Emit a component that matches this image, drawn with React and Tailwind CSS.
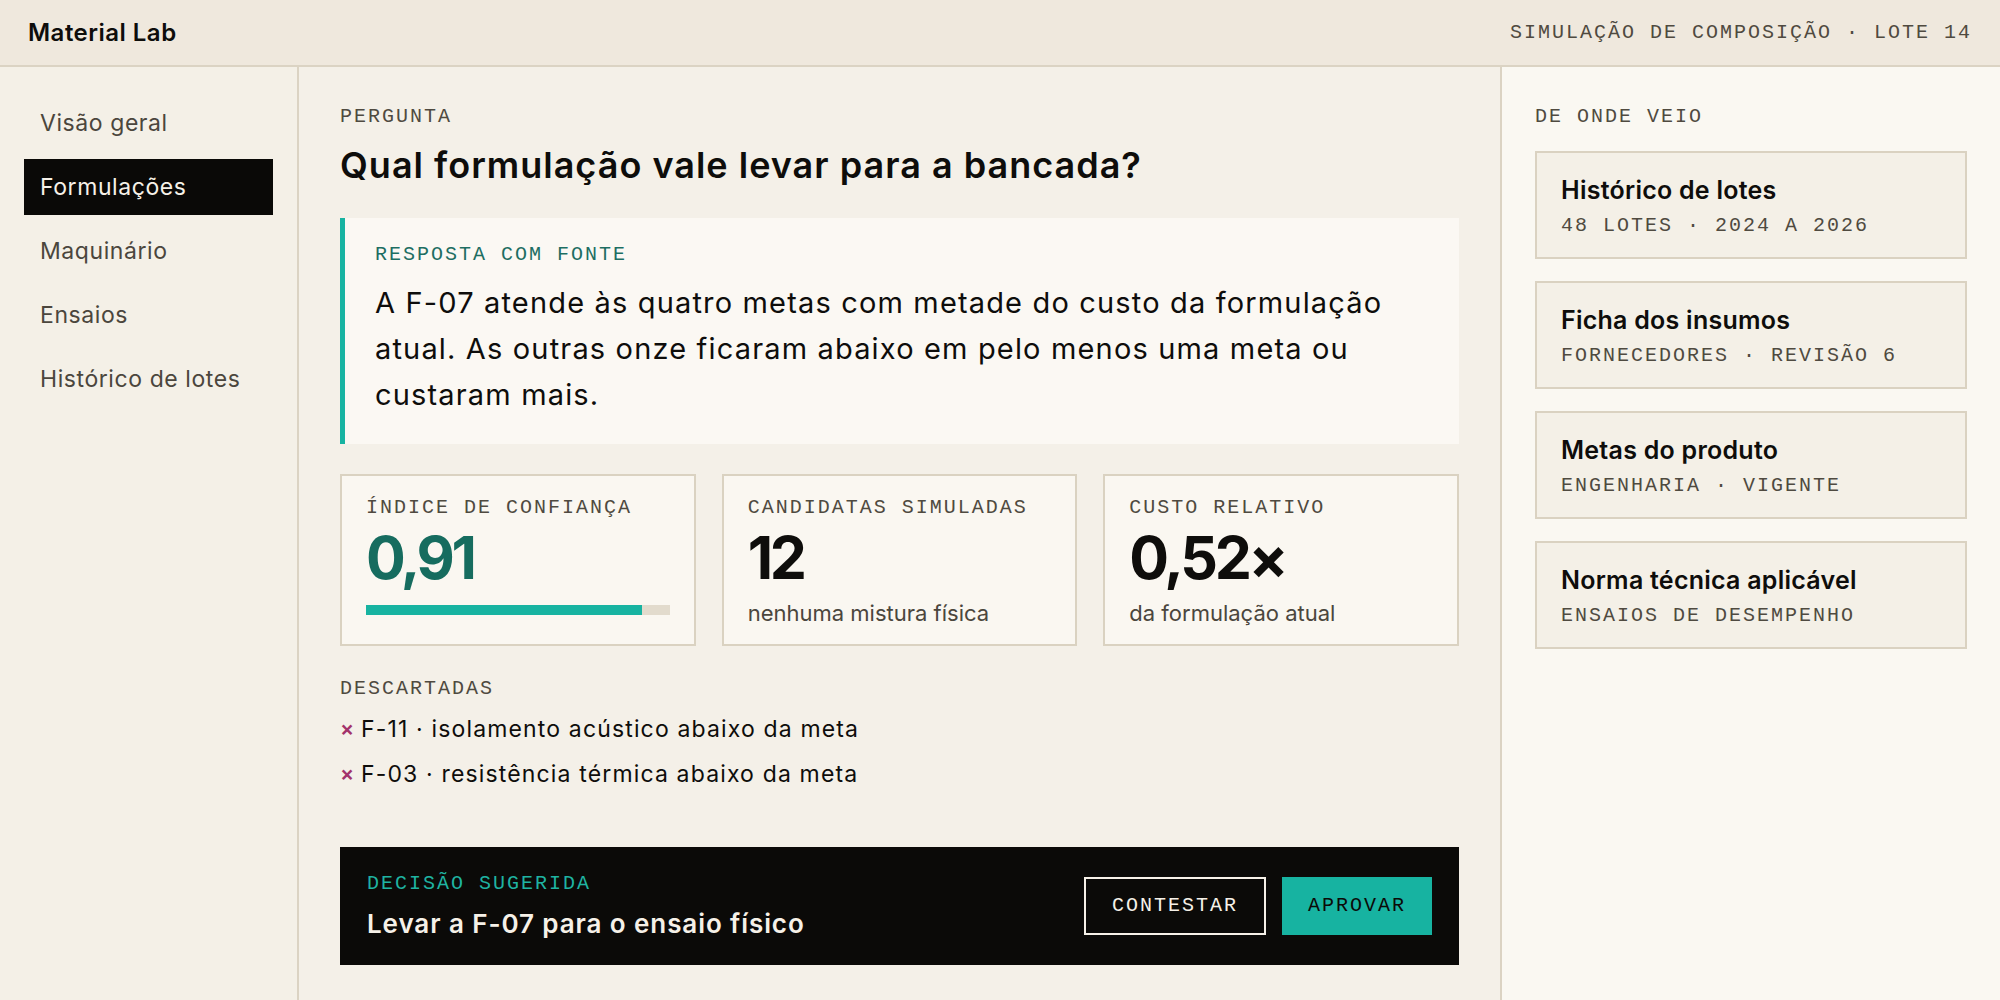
const navItems = [
  { id: 1, text: 'Visão geral' },
  { id: 2, text: 'Formulações', active: true },
  { id: 3, text: 'Maquinário' },
  { id: 4, text: 'Ensaios' },
  { id: 5, text: 'Histórico de lotes' },
];

const sources = [
  { id: 1, title: 'Histórico de lotes', meta: '48 LOTES · 2024 A 2026' },
  { id: 2, title: 'Ficha dos insumos', meta: 'FORNECEDORES · REVISÃO 6' },
  { id: 3, title: 'Metas do produto', meta: 'ENGENHARIA · VIGENTE' },
  { id: 4, title: 'Norma técnica aplicável', meta: 'ENSAIOS DE DESEMPENHO' },
];

const discarded = [
  { id: 'F-11', reason: 'isolamento acústico abaixo da meta' },
  { id: 'F-03', reason: 'resistência térmica abaixo da meta' },
];

const mono = "font-['Liberation_Mono','DejaVu_Sans_Mono',monospace] text-[20px] leading-[24px] tracking-[0.1em]";

const StatCard = ({ label, value, valueClass, children }) => (
  <div className="h-[172px] border-2 border-[#dad2c1] bg-[#faf7f1] px-[24px] pt-[20px]">
    <div className={`${mono} text-[#4f4a40]`}>{label}</div>
    <div className={`mt-[8px] text-[59px] leading-[60px] font-bold tracking-[-0.055em] ${valueClass}`}>
      {value}
    </div>
    {children}
  </div>
);

const App = () => {
  const confidence = 0.91;

  return (
    <div className="h-screen flex flex-col bg-[#f4f0e8] text-[#0e0d0b] font-['Inter','Liberation_Sans',sans-serif]">
      {/* Top bar */}
      <header className="h-[67px] shrink-0 flex items-center justify-between px-[28px] bg-[#efe8dd] border-b-2 border-[#dbd3c3]">
        <div className="text-[24px] font-semibold tracking-[0.02em]">Material Lab</div>
        <div className={`${mono} text-[#4f4a40]`}>SIMULAÇÃO DE COMPOSIÇÃO · LOTE 14</div>
      </header>

      <div className="flex flex-1 min-h-0">
        {/* Sidebar */}
        <aside className="w-[299px] shrink-0 border-r-2 border-[#dbd3c3] bg-[#f4f0e7] px-[24px] pt-[28px]">
          <nav className="flex flex-col gap-2">
            {navItems.map((item) => (
              <div
                key={item.id}
                className={`h-[56px] flex items-center px-4 text-[23px] tracking-[0.025em] ${
                  item.active ? 'bg-[#0a0907] text-[#f6f1e8]' : 'text-[#4b463d]'
                }`}
              >
                {item.text}
              </div>
            ))}
          </nav>
        </aside>

        {/* Main */}
        <main className="flex-1 min-w-0 px-[41px] pt-[38px]">
          <div className={`${mono} text-[#4f4a40]`}>PERGUNTA</div>
          <h1 className="mt-[14px] text-[36px] leading-[44px] font-semibold tracking-[0.028em]">
            Qual formulação vale levar para a bancada?
          </h1>

          <section className="mt-[31px] border-l-[5px] border-[#17b3a1] bg-[#fbf8f3] pl-[30px] pr-[30px] pt-[25px] pb-[26px]">
            <div className={`${mono} text-[#1d6e62]`}>RESPOSTA COM FONTE</div>
            <p className="mt-[13px] text-[29px] leading-[46px] tracking-[0.04em] text-[#0e0d0b]">
              A F-07 atende às quatro metas com metade do custo da formulação atual. As outras onze ficaram abaixo em
              pelo menos uma meta ou custaram mais.
            </p>
          </section>

          <div className="mt-[30px] grid grid-cols-3 gap-[26px]">
            <StatCard label="ÍNDICE DE CONFIANÇA" value="0,91" valueClass="text-[#166c5f]">
              <div className="mt-[17px] h-[10px] bg-[#e2dbcd]">
                <div className="h-full bg-[#17b3a1]" style={{ width: `${confidence * 100}%` }} />
              </div>
            </StatCard>
            <StatCard label="CANDIDATAS SIMULADAS" value="12" valueClass="text-[#0e0d0b]">
              <div className="mt-[11px] text-[22px] leading-[28px] text-[#4b463d]">nenhuma mistura física</div>
            </StatCard>
            <StatCard label="CUSTO RELATIVO" value="0,52×" valueClass="text-[#0e0d0b]">
              <div className="mt-[11px] text-[22px] leading-[28px] text-[#4b463d]">da formulação atual</div>
            </StatCard>
          </div>

          <div className={`mt-[31px] ${mono} text-[#4f4a40]`}>DESCARTADAS</div>
          <ul className="mt-[11px] flex flex-col gap-[11px]">
            {discarded.map((d) => (
              <li key={d.id} className="flex items-center h-[34px] text-[23px] tracking-[0.05em]">
                <span className="w-[21px] text-[21px] font-semibold text-[#a3336b]">×</span>
                <span>
                  {d.id} · {d.reason}
                </span>
              </li>
            ))}
          </ul>

          {/* Decision */}
          <section className="mt-[56px] h-[118px] bg-[#0b0a08] flex items-center justify-between px-[27px]">
            <div>
              <div className={`${mono} text-[#1fb3a1]`}>DECISÃO SUGERIDA</div>
              <div className="mt-[12px] text-[26px] leading-[32px] font-semibold text-[#f6f1e8] tracking-[0.035em]">
                Levar a F-07 para o ensaio físico
              </div>
            </div>
            <div className="flex gap-4">
              <button className={`h-[58px] px-[26px] border-2 border-[#f6f1e8] text-[#f6f1e8] ${mono}`}>
                CONTESTAR
              </button>
              <button className={`h-[58px] px-[26px] bg-[#17b3a1] text-[#0b0a08] ${mono}`}>APROVAR</button>
            </div>
          </section>
        </main>

        {/* Sources */}
        <aside className="w-[500px] shrink-0 border-l-2 border-[#dbd3c3] bg-[#faf8f2] px-[33px] pt-[38px]">
          <div className={`${mono} text-[#4f4a40]`}>DE ONDE VEIO</div>
          <div className="mt-[22px] flex flex-col gap-[22px]">
            {sources.map((s) => (
              <div key={s.id} className="h-[108px] border-2 border-[#dad2c1] bg-[#f4f0e7] px-[24px] pt-[22px]">
                <div className="text-[25px] leading-[30px] font-semibold tracking-[0.01em]">{s.title}</div>
                <div className={`mt-[9px] ${mono} text-[#4f4a40]`}>{s.meta}</div>
              </div>
            ))}
          </div>
        </aside>
      </div>
    </div>
  );
};

export default App;
